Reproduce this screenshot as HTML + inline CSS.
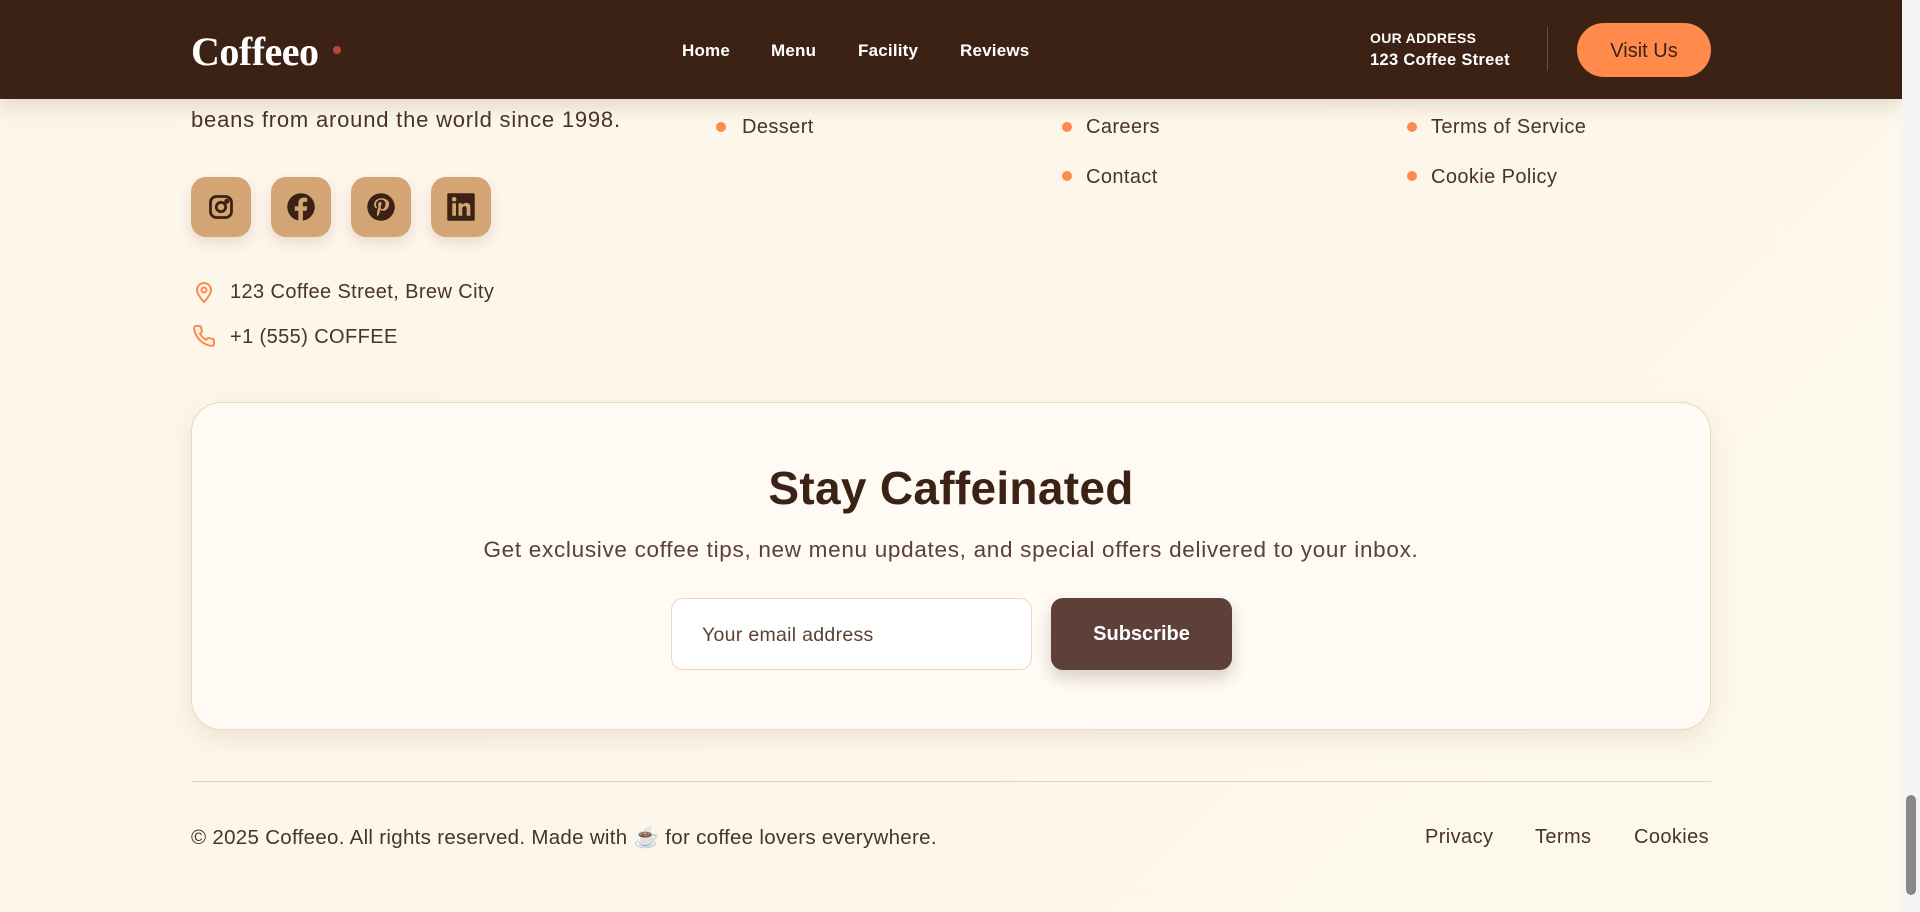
<!DOCTYPE html>
<html><head><meta charset="utf-8"><style>
*{margin:0;padding:0;box-sizing:border-box}
body{width:1920px;height:912px;overflow:hidden;background:linear-gradient(135deg,#fdf5ea,#fdf8ec);font-family:"Liberation Sans",sans-serif;color:#4a3328;position:relative}
.hdr{position:absolute;left:0;top:0;width:1902px;height:99px;background:#3c2215;box-shadow:0 6px 20px rgba(60,34,21,.15)}
.logo{position:absolute;left:191px;top:28px;font-family:"Liberation Serif",serif;font-weight:bold;font-size:40px;color:#fff;letter-spacing:-0.5px}
.dot{position:absolute;left:333px;top:46px;width:8px;height:8px;border-radius:50%;background:#b5483a}
.nav a{position:absolute;top:41px;color:#fff;font-weight:bold;font-size:17px;text-decoration:none;letter-spacing:.2px}
.addr{position:absolute;left:1370px;top:30px;color:#fff;font-weight:bold;letter-spacing:.3px}
.addr .a{font-size:14px}.addr .b{font-size:16.5px;margin-top:5px}
.div{position:absolute;left:1547px;top:27px;width:1px;height:44px;background:#6b5040}
.btn{position:absolute;left:1577px;top:23px;width:134px;height:54px;border-radius:27px;background:#ff8a4c;color:#3c2215;font-size:20px;text-align:center;line-height:56px;font-weight:500}
.t{position:absolute;font-size:20px;color:#4a3328;white-space:nowrap;letter-spacing:.4px}
.b2{position:absolute;width:10px;height:10px;border-radius:50%;background:#ff8a4c}
.soc{position:absolute;top:177px;width:60px;height:60px;border-radius:15px;background:#d4a574;box-shadow:0 6px 12px rgba(120,80,40,.15);display:flex;align-items:center;justify-content:center}
.card{position:absolute;left:191px;top:402px;width:1520px;height:328px;border-radius:30px;background:#fffaf4;border:1px solid #ecd8bc;box-shadow:0 10px 24px rgba(120,80,40,.1)}
.h{position:absolute;left:0;width:100%;top:58px;text-align:center;font-size:46px;font-weight:bold;color:#3c2215;letter-spacing:.3px}
.sub{position:absolute;left:0;width:100%;top:134px;text-align:center;font-size:22.5px;color:#5a4035;letter-spacing:.7px}
.inp{position:absolute;left:479px;top:195px;width:361px;height:72px;border:1px solid #ecd8bc;border-radius:12px;background:#fff;font-size:19.5px;color:#5a4035;padding-left:30px;line-height:72px;letter-spacing:.3px}
.sb{position:absolute;left:859px;top:195px;width:181px;height:72px;border-radius:12px;background:#5d4037;color:#fff;font-weight:bold;font-size:20px;text-align:center;line-height:72px;box-shadow:0 8px 16px rgba(60,34,21,.2)}
.line{position:absolute;left:191px;top:781px;width:1520px;height:1px;background:#e8d3b5}
.sc{position:absolute;left:1902px;top:0;width:18px;height:912px;background:#f5f5f5}
.th{position:absolute;left:1906px;top:795px;width:10px;height:100px;border-radius:5px;background:#888}
</style></head><body>
<div class="t" style="left:191px;top:107px;font-size:22px;letter-spacing:.8px">beans from around the world since 1998.</div>
<div class="b2" style="left:716px;top:122px"></div><div class="t" style="left:742px;top:116px">Dessert</div>
<div class="b2" style="left:1062px;top:122px"></div><div class="t" style="left:1086px;top:116px">Careers</div>
<div class="b2" style="left:1062px;top:171px"></div><div class="t" style="left:1086px;top:166px">Contact</div>
<div class="b2" style="left:1407px;top:122px"></div><div class="t" style="left:1431px;top:116px">Terms of Service</div>
<div class="b2" style="left:1407px;top:171px"></div><div class="t" style="left:1431px;top:166px">Cookie Policy</div>
<div class="soc" style="left:191px"><svg width="28" height="28" viewBox="0 0 24 24" fill="none" stroke="#3c2215" stroke-width="2.4"><rect x="3" y="3" width="18" height="18" rx="5"/><circle cx="12" cy="12" r="4"/><circle cx="17" cy="7" r="1" fill="#3c2215"/></svg></div>
<div class="soc" style="left:271px"><svg width="30" height="30" viewBox="0 0 24 24"><circle cx="12" cy="12" r="11" fill="#3c2215"/><path d="M13.5 24v-9h3l.5-3.5h-3.5V9.5c0-1 .4-1.7 1.8-1.7H17V4.7c-.4 0-1.5-.2-2.8-.2-2.7 0-4.3 1.6-4.3 4.5v2.5H7V15h2.9v9z" fill="#d4a574"/></svg></div>
<div class="soc" style="left:351px"><svg width="30" height="30" viewBox="0 0 24 24"><circle cx="12" cy="12" r="11" fill="#3c2215"/><path d="M12.3 5C8.4 5 6.5 7.7 6.5 10c0 1.4.5 2.6 1.6 3 .2.1.3 0 .4-.2l.2-.7c0-.2 0-.3-.2-.5-.3-.4-.5-.9-.5-1.6 0-2.1 1.6-3.9 4.1-3.9 2.2 0 3.5 1.4 3.5 3.2 0 2.4-1 4.4-2.6 4.4-.9 0-1.5-.7-1.3-1.6.2-1 .7-2.2.7-2.9 0-.7-.4-1.2-1.1-1.2-.9 0-1.6.9-1.6 2.2 0 .8.3 1.3.3 1.3l-1.1 4.6c-.3 1.4 0 3.2 0 3.3h.3c.1-.2 1.3-1.6 1.7-3l.6-2.5c.3.6 1.2 1.1 2.2 1.1 2.9 0 4.8-2.6 4.8-6.1C18.5 7.5 16.2 5 12.3 5z" fill="#d4a574"/></svg></div>
<div class="soc" style="left:431px"><svg width="30" height="30" viewBox="0 0 24 24"><rect x="1" y="1" width="22" height="22" rx="1" fill="#3c2215"/><rect x="5" y="9" width="3" height="10" fill="#d4a574"/><circle cx="6.5" cy="5.8" r="1.8" fill="#d4a574"/><path d="M10 9h3v1.5c.6-1 1.7-1.8 3.3-1.8 2.6 0 3.2 1.7 3.2 4V19h-3v-5.5c0-1.2-.3-2.2-1.6-2.2s-1.9 1-1.9 2.2V19h-3z" fill="#d4a574"/></svg></div>
<svg style="position:absolute;left:192px;top:279px" width="24" height="26" viewBox="0 0 24 24" fill="none" stroke="#ff8a4c" stroke-width="2"><path d="M12 22s-7-7-7-12a7 7 0 0 1 14 0c0 5-7 12-7 12z"/><circle cx="12" cy="10" r="2.5"/></svg>
<div class="t" style="left:230px;top:281px">123 Coffee Street, Brew City</div>
<svg style="position:absolute;left:192px;top:324px" width="24" height="24" viewBox="0 0 24 24" fill="none" stroke="#ff8a4c" stroke-width="2"><path d="M22 16.9v3a2 2 0 0 1-2.2 2 19.8 19.8 0 0 1-8.6-3.1 19.5 19.5 0 0 1-6-6A19.8 19.8 0 0 1 2.1 4.2 2 2 0 0 1 4.1 2h3a2 2 0 0 1 2 1.7c.1 1 .4 1.9.7 2.8a2 2 0 0 1-.5 2.1L8 9.8a16 16 0 0 0 6 6l1.3-1.3a2 2 0 0 1 2.1-.4c.9.3 1.8.6 2.8.7a2 2 0 0 1 1.7 2z"/></svg>
<div class="t" style="left:230px;top:326px">+1 (555) COFFEE</div>
<div class="card"><div class="h">Stay Caffeinated</div><div class="sub">Get exclusive coffee tips, new menu updates, and special offers delivered to your inbox.</div><div class="inp">Your email address</div><div class="sb">Subscribe</div></div>
<div class="line"></div>
<div class="t" style="left:191px;top:826px;font-size:20.5px;letter-spacing:.3px">© 2025 Coffeeo. All rights reserved. Made with <span style="color:#7a5a7a">☕</span> for coffee lovers everywhere.</div>
<div class="t" style="left:1425px;top:826px">Privacy</div>
<div class="t" style="left:1535px;top:826px">Terms</div>
<div class="t" style="left:1634px;top:826px">Cookies</div>
<div class="hdr"><div class="logo">Coffeeo</div><div class="dot"></div>
<div class="nav"><a style="left:682px">Home</a><a style="left:771px">Menu</a><a style="left:858px">Facility</a><a style="left:960px">Reviews</a></div>
<div class="addr"><div class="a">OUR ADDRESS</div><div class="b">123 Coffee Street</div></div><div class="div"></div><div class="btn">Visit Us</div></div>
<div class="sc"></div><div class="th"></div>
</body></html>
